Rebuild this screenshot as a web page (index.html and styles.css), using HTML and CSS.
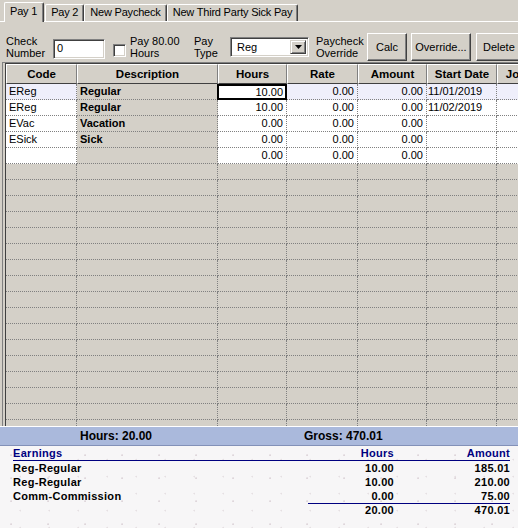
FILE: index.html
```html
<!DOCTYPE html>
<html lang="en">
<head>
    <meta charset="UTF-8">
    <title>Paycheck</title>
    <link rel="stylesheet" href="styles.css">
</head>
<body>

    <div class="tabs">
        <div class="tab active">Pay 1</div>
        <div class="tab">Pay 2</div>
        <div class="tab">New Paycheck</div>
        <div class="tab">New Third Party Sick Pay</div>
    </div>

    <div class="toolbar">
        <span class="lbl lbl-check">Check<br>Number</span>
        <span class="input">0</span>
        <span class="check"></span>
        <span class="lbl lbl-pay80">Pay 80.00<br>Hours</span>
        <span class="lbl lbl-type">Pay<br>Type</span>
        <span class="select">
            <span class="select-val">Reg</span>
            <span class="select-btn"><svg width="7" height="4" viewBox="0 0 7 4"><polygon points="0,0 7,0 3.5,4" fill="#000"/></svg></span>
        </span>
        <span class="lbl lbl-override">Paycheck<br>Override</span>
        <button class="btn btn-calc">Calc</button>
        <button class="btn btn-override">Override...</button>
        <button class="btn btn-delete">Delete Line</button>
    </div>

    <div class="grid">
        <div class="grid-frame">
            <div class="grid-head">
                <span>Code</span><span>Description</span><span>Hours</span><span>Rate</span><span>Amount</span><span>Start Date</span><span>Job</span>
            </div>
            <div class="grid-body">
                <div class="row sel">
                    <span class="w">EReg</span><span class="g desc">Regular</span><span class="edit num">10.00</span><span class="w num">0.00</span><span class="w num">0.00</span><span class="w">11/01/2019</span><span class="w"></span>
                </div>
                <div class="row">
                    <span class="w">EReg</span><span class="g desc">Regular</span><span class="w num">10.00</span><span class="w num">0.00</span><span class="w num">0.00</span><span class="w">11/02/2019</span><span class="w"></span>
                </div>
                <div class="row">
                    <span class="w">EVac</span><span class="g desc">Vacation</span><span class="w num">0.00</span><span class="w num">0.00</span><span class="w num">0.00</span><span class="w"></span><span class="w"></span>
                </div>
                <div class="row">
                    <span class="w">ESick</span><span class="g desc">Sick</span><span class="w num">0.00</span><span class="w num">0.00</span><span class="w num">0.00</span><span class="w"></span><span class="w"></span>
                </div>
                <div class="row">
                    <span class="w"></span><span class="g desc"></span><span class="w num">0.00</span><span class="w num">0.00</span><span class="w num">0.00</span><span class="w"></span><span class="w"></span>
                </div>
                <div class="row"><span></span><span></span><span></span><span></span><span></span><span></span><span></span></div>
                <div class="row"><span></span><span></span><span></span><span></span><span></span><span></span><span></span></div>
                <div class="row"><span></span><span></span><span></span><span></span><span></span><span></span><span></span></div>
                <div class="row"><span></span><span></span><span></span><span></span><span></span><span></span><span></span></div>
                <div class="row"><span></span><span></span><span></span><span></span><span></span><span></span><span></span></div>
                <div class="row"><span></span><span></span><span></span><span></span><span></span><span></span><span></span></div>
                <div class="row"><span></span><span></span><span></span><span></span><span></span><span></span><span></span></div>
                <div class="row"><span></span><span></span><span></span><span></span><span></span><span></span><span></span></div>
                <div class="row"><span></span><span></span><span></span><span></span><span></span><span></span><span></span></div>
                <div class="row"><span></span><span></span><span></span><span></span><span></span><span></span><span></span></div>
                <div class="row"><span></span><span></span><span></span><span></span><span></span><span></span><span></span></div>
                <div class="row"><span></span><span></span><span></span><span></span><span></span><span></span><span></span></div>
                <div class="row"><span></span><span></span><span></span><span></span><span></span><span></span><span></span></div>
                <div class="row"><span></span><span></span><span></span><span></span><span></span><span></span><span></span></div>
                <div class="row"><span></span><span></span><span></span><span></span><span></span><span></span><span></span></div>
                <div class="row"><span></span><span></span><span></span><span></span><span></span><span></span><span></span></div>
                <div class="row"><span></span><span></span><span></span><span></span><span></span><span></span><span></span></div>
            </div>
        </div>
    </div>

    <div class="totals-bar">
        <span class="tot-hours">Hours: 20.00</span>
        <span>Gross: 470.01</span>
    </div>

    <div class="earnings">
        <div class="e-head">Earnings</div><div class="e-head num">Hours</div><div class="e-head num">Amount</div>
        <div>Reg-Regular</div><div class="num">10.00</div><div class="num">185.01</div>
        <div>Reg-Regular</div><div class="num">10.00</div><div class="num">210.00</div>
        <div>Comm-Commission</div><div class="num">0.00</div><div class="num">75.00</div>
        <div></div><div class="num e-total first">20.00</div><div class="num e-total">470.01</div>
    </div>

</body>
</html>
```

FILE: styles.css
```css
* { box-sizing: border-box; margin: 0; padding: 0; }
body {
    width: 518px; height: 528px; overflow: hidden;
    background: #d4d0c8; color: #000;
    font-family: "Liberation Sans", Arial, sans-serif; font-size: 11px;
}

/* tabs */
.tabs {
    display: flex; align-items: flex-end;
    height: 22px; padding-left: 4px;
    border-bottom: 1px solid #fff;
}
.tab {
    height: 17px; padding: 0 5px; line-height: 15px;
    letter-spacing: -0.2px; white-space: nowrap;
    background: #d4d0c8;
    border: 1px solid #fff; border-bottom: none; border-right-color: #404040;
    box-shadow: inset -1px 0 #808080;
    border-radius: 2px 2px 0 0;
}
.tab.active {
    height: 20px; margin-bottom: -1px; margin-right: 1px;
    line-height: 17px; padding: 0 6px 0 5px;
}

/* toolbar */
.toolbar {
    display: flex; align-items: center;
    height: 40px; padding: 10px 0 0 6px;
}
.lbl { flex: none; line-height: 12px; white-space: nowrap; }
.lbl-check { width: 47px; }
.lbl-pay80 { width: 64px; }
.lbl-type { width: 36px; }
.lbl-override { width: 51px; }
.input {
    flex: none; width: 52px; height: 20px; margin: 4px 8px 0 0;
    padding-left: 3px; line-height: 16px;
    background: #fff;
    border: 1px solid; border-color: #808080 #fff #fff #808080;
    box-shadow: inset 1px 1px #404040, inset -1px -1px #d4d0c8;
}
.check {
    flex: none; width: 13px; height: 13px; margin: 6px 4px 0 0;
    background: #fff;
    border: 1px solid; border-color: #808080 #fff #fff #808080;
    box-shadow: inset 1px 1px #404040, inset -1px -1px #d4d0c8;
}
.select {
    flex: none; display: flex; width: 79px; height: 20px; margin-right: 7px;
    background: #fff;
    border: 1px solid; border-color: #808080 #fff #fff #808080;
    box-shadow: inset 1px 1px #404040, inset -1px -1px #d4d0c8;
    padding: 2px;
}
.select-val { flex: 1; padding-left: 4px; line-height: 15px; }
.select-btn {
    width: 16px; display: flex; align-items: center; justify-content: center;
    background: #d4d0c8;
    border: 1px solid; border-color: #d4d0c8 #404040 #404040 #d4d0c8;
    box-shadow: inset 1px 1px #fff, inset -1px -1px #808080;
}
.btn {
    flex: none; height: 28px;
    font: inherit; color: #000; background: #d4d0c8;
    border: 1px solid; border-color: #fff #404040 #404040 #fff;
    box-shadow: inset -1px -1px #808080;
    white-space: nowrap; overflow: hidden;
}
.btn-calc { width: 40px; }
.btn-override { width: 60px; margin-left: 4px; }
.btn-delete { width: 70px; margin-left: 5px; text-align: left; padding-left: 6px; }

/* grid */
.grid {
    margin-left: 2px;
    border-top: 1px solid #808080; border-left: 1px solid #808080;
}
.grid-frame {
    margin-left: 2px;
    border-top: 1px solid #404040; border-left: 1px solid #404040;
}
.grid-head, .row {
    display: grid;
    grid-template-columns: 71px 141px 69px 71px 69px 70px 38px;
}
.grid-head span {
    height: 20px; line-height: 18px; text-align: center;
    font-weight: bold; font-size: 11.5px; white-space: nowrap; overflow: hidden;
    border: 1px solid; border-color: #fff #808080 #404040 #fff;
}
.grid-body { height: 342px; overflow: hidden; }
.row span {
    height: 16px; line-height: 15px; padding: 0 3px;
    white-space: nowrap; overflow: hidden;
    border-right: 1px dotted #808080; border-bottom: 1px dotted #808080;
}
.row .w { background: #fff; }
.row.sel .w { background: #efeffb; }
.row .desc { font-weight: bold; }
.row .num { text-align: right; }
.row span:nth-child(6) { padding-left: 1px; }
.row .edit {
    margin-left: -1px; padding-right: 2px; line-height: 12px;
    background: #fff; border: 2px solid #000;
}

/* totals */
.totals-bar {
    display: flex; height: 20px; padding-left: 80px;
    background: #aab9dc; line-height: 18px;
    border-top: 1px solid #fff; border-bottom: 1px solid #8391b8;
    font-size: 12px; font-weight: bold;
}
.tot-hours { width: 224px; }

.earnings {
    display: grid; grid-template-columns: 1fr 90px 116px;
    align-content: start;
    height: 82px; padding: 1px 8px 0 13px;
    line-height: 14px; font-weight: bold; letter-spacing: 0.3px;
    background-color: #f7f6f7;
    background-image:
        radial-gradient(circle at 30% 40%, rgba(150, 120, 135, 0.25) 0.6px, transparent 1.2px),
        radial-gradient(circle at 70% 80%, rgba(150, 120, 135, 0.18) 0.6px, transparent 1.2px);
    background-size: 37px 23px, 29px 17px;
}
.earnings .num { text-align: right; }
.e-head { color: #000080; line-height: 13px; border-bottom: 1px solid #000080; }
.e-total { border-top: 1px solid #000080; line-height: 13px; }
.e-total.first { margin-left: 4px; }
```
